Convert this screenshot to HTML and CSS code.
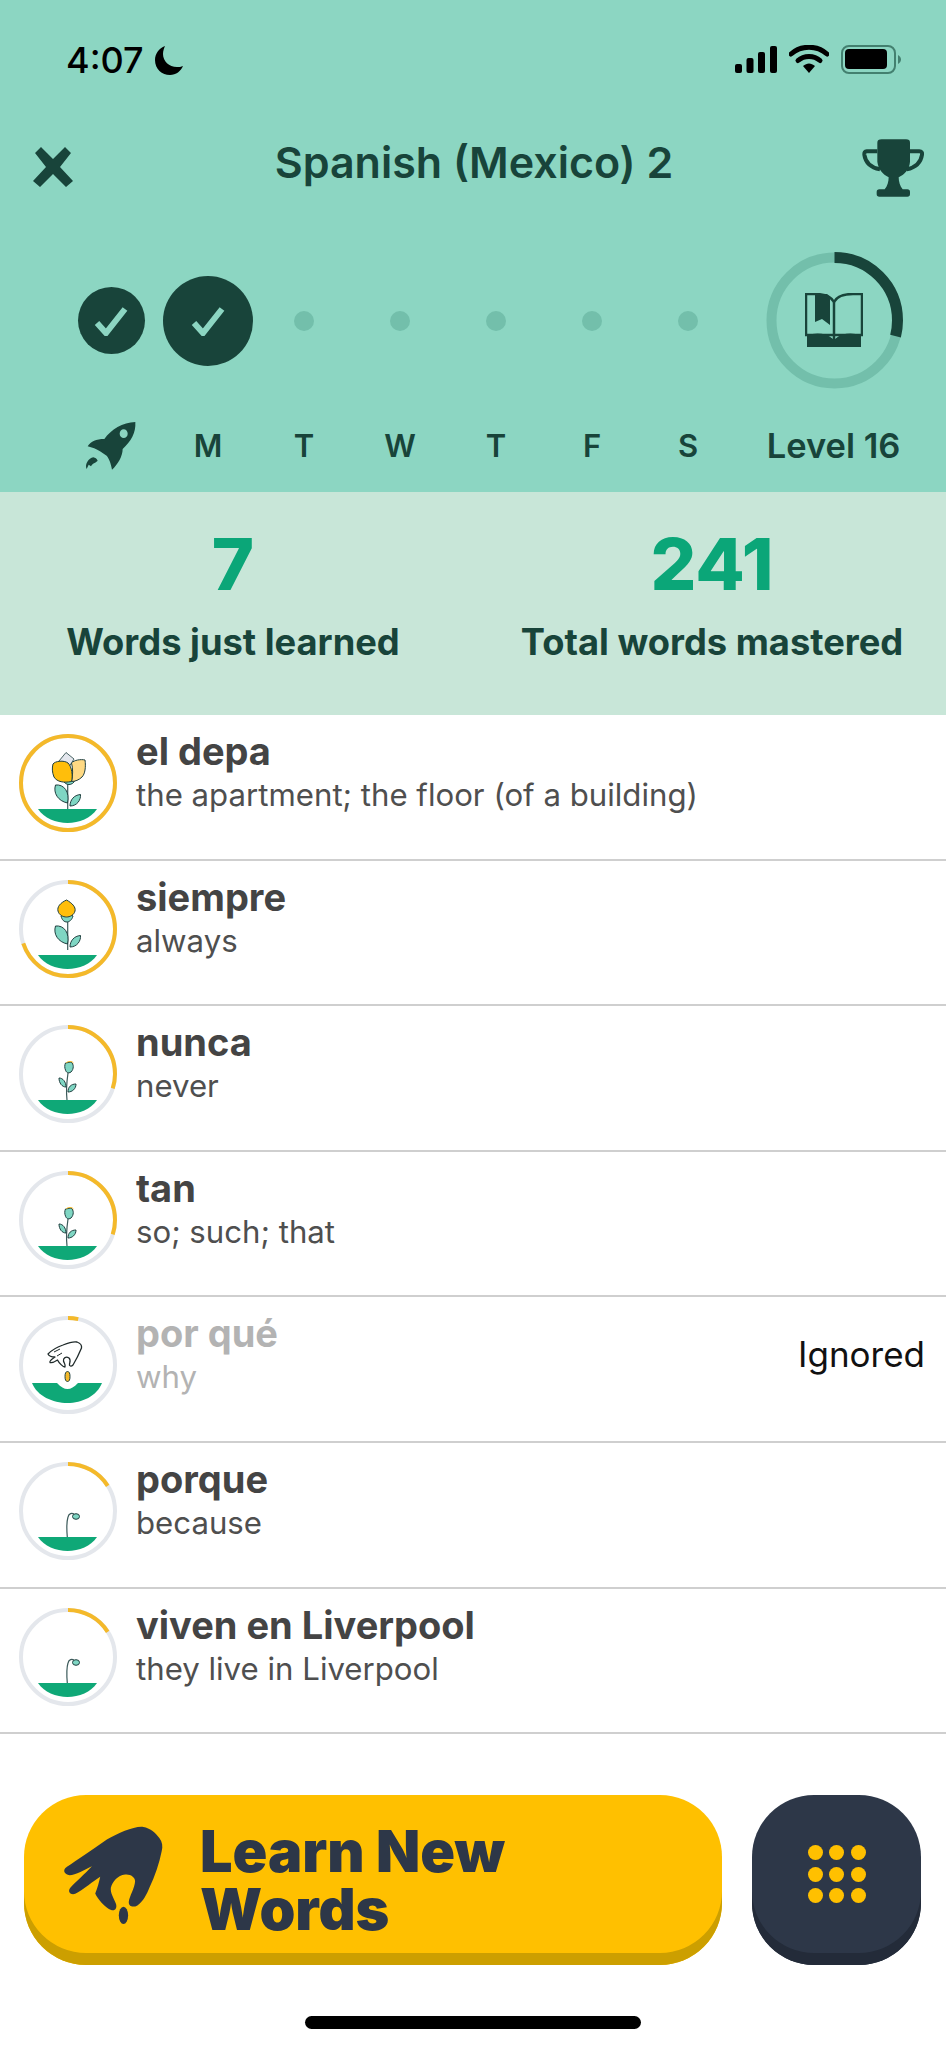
FILE: index.html
```html
<!DOCTYPE html>
<html lang="en">
<head>
  <meta charset="UTF-8" />
  <title>Spanish (Mexico) 2</title>
  <link rel="stylesheet" href="styles.css">
</head>
<body>
  <svg class="defs" width="0" height="0">
    <defs>
      <symbol id="ground" viewBox="0 0 98 98">
        <path d="M19 75H78C72 84 60 89 48.5 89S25 84 19 75Z" fill="#0fa877"/>
      </symbol>
      <symbol id="leaves-big" viewBox="0 0 98 98">
        <path d="M48.700 75V40" class="stem"/>
        <path d="M48.500 69C39 67 34 59 36.500 51C45 50 51 58 48.500 69Z" class="leaf"/>
        <path d="M51 72C51 66 55 61 61.500 60.500C62 66 58 72 51 72Z" class="leaf"/>
      </symbol>
      <symbol id="tulip" viewBox="0 0 98 98">
        <use href="#leaves-big"/>
        <path d="M44 46C46 52 54 52 56 46Z" class="leaf"/>
        <path d="M47 18.500L40 27L48 36L55 25Z" fill="#e4e7ee" stroke="#1f3f3f" stroke-width=".8"/>
        <path d="M52.500 29C55 26 62 25 66 26C67 33 66 40 63 43C60 46 56 47.500 52.500 47.500C54 42 54 34 52.500 29Z" fill="#ffd983" stroke="#1f3f3f" stroke-width="1"/>
        <path d="M34 30C36 27 45 26 49 29C53 33 54 42 52.500 47.500C45 49 38 48 35 43C33 38 33 34 34 30Z" fill="#ffbe0b" stroke="#1f3f3f" stroke-width="1"/>
      </symbol>
      <symbol id="bud" viewBox="0 0 98 98">
        <use href="#leaves-big" y="-5"/>
        <path d="M42 36C44 34 52 34 54 36C53 40 50 42 48 42C45 42 43 40 42 36Z" class="leaf"/>
        <path d="M47.500 20C41 23 38 27 39 31C40 35 44 37 47.500 37C51 37 55 35 56 31C57 27 53 23 47.500 20Z" fill="#ffbe0b" stroke="#1f3f3f" stroke-width="1"/>
      </symbol>
      <symbol id="seedling" viewBox="0 0 98 98">
        <path d="M48 75C47 66 48 55 49 48" class="stem"/>
        <path d="M47 62C43 62 40 58 40 53C44 53 47 57 47 62Z" class="leaf"/>
        <path d="M49 67C49 62 52 59 57 59C57 64 53 67 49 67Z" class="leaf"/>
        <path d="M46.500 38L52 37C55 39 55 44 52 47C49 49 47 47 46.500 45C45.500 43 45.500 40 46.500 38Z" class="leaf"/>
        <path d="M47 38C49 36 53 36 54.500 38" fill="none" stroke="#f4b92a" stroke-width="1"/>
      </symbol>
      <symbol id="hand-outline" viewBox="0 0 98 98">
        <path d="M58 26C61 27 63 29 62.500 32C60 38 57 44 54 49C52 51 50 50 50.500 48C51 46 52 44 50 42C47 40 44 42 44.500 45C45 47 47 49 46 51C44 51 40 47 38.500 44C37 45 33 47 31 46.500C30 45 33 43 36 41C33 41 30 40 29 38C32 35 38 31 44 29C49 27 54 25 58 26Z" fill="#fff" stroke="#1f2a2a" stroke-width="1.300" stroke-linejoin="round"/>
        <path d="M35 36L41 33M38 40L43 37" stroke="#1f2a2a" stroke-width="1" fill="none"/>
      </symbol>
      <symbol id="seed" viewBox="0 0 98 98">
        <path d="M13 67H38C42 71 45 73 48.500 73S55 71 59 67H83C78 80 63 87 48.500 87S18 80 13 67Z" fill="#0fa877"/>
        <ellipse cx="48.500" cy="60.500" rx="2.500" ry="5" fill="#f4b92a" stroke="#1f3f3f" stroke-width="1"/>
        <use href="#hand-outline"/>
      </symbol>
      <symbol id="sprout" viewBox="0 0 98 98">
        <path d="M48.300 75C47.500 66 47.500 60 49 55C50 51 53 51 55 52" class="stem"/>
        <ellipse cx="57" cy="54.500" rx="3.500" ry="2.800" class="leaf"/>
      </symbol>
    </defs>
  </svg>

  <header class="top">
    <div class="status">
      <div class="status-left">
        <span class="clock">4:07</span>
        <svg class="moon" viewBox="0 0 28 29"><path d="M10 0C4 2 0 8 0 14C0 23 7 29 15 29C21 29 26 25 28 20C26 21 24 21 22 21C14 21 8 15 8 8C8 5 9 2 10 0Z" fill="#000"/></svg>
      </div>
      <div class="status-right">
        <svg class="signal" viewBox="0 0 42 27">
          <rect x="0" y="18" width="7" height="9" rx="2"/>
          <rect x="11.500" y="12" width="7" height="15" rx="2"/>
          <rect x="23" y="6" width="7" height="21" rx="2"/>
          <rect x="35" y="0" width="7" height="27" rx="2"/>
        </svg>
        <svg class="wifi" viewBox="0 0 40 28">
          <path d="M2 9C12 0 28 0 38 9" fill="none" stroke="#000" stroke-width="5" stroke-linecap="round"/>
          <path d="M9 15.500C15 10 25 10 31 15.500" fill="none" stroke="#000" stroke-width="5" stroke-linecap="round"/>
          <path d="M14 21C18 17.500 22 17.500 26 21L20 28Z" fill="#000"/>
        </svg>
        <svg class="battery" viewBox="0 0 60 29">
          <rect x="1" y="1" width="53" height="27" rx="7" fill="none" stroke="#43806f" stroke-width="2"/>
          <rect x="4" y="4" width="42" height="20" rx="4" fill="#000"/>
          <path d="M57 10C59 11 60 13 60 14.500S59 18 57 19Z" fill="#43806f"/>
        </svg>
      </div>
    </div>

    <nav class="nav">
      <svg class="close" viewBox="0 0 42 40"><path d="M3 6L9 0L21 12L33 0L39 6L28 20L41 34L34 40L21 27L8 40L1 34L14 20Z" fill="#18443a"/></svg>
      <h1 class="title">Spanish (Mexico) 2</h1>
      <svg class="trophy" viewBox="0 0 252 228">
        <path d="M82 38Q82 28 95 28H168Q180 28 180 38V95C178 118 165 132 146 142C146 155 150 170 158 178H172Q180 178 180 186V192Q180 200 172 200H88Q80 200 80 192V186Q80 178 88 178H104C112 170 116 155 116 142C98 132 85 118 82 95Z" fill="#18443a"/>
        <path d="M82 64H50Q42 64 43 74C46 95 60 112 90 118M180 64H208Q218 64 216 74C213 95 198 112 170 118" fill="none" stroke="#18443a" stroke-width="12"/>
      </svg>
    </nav>

    <div class="week">
      <span class="done small"><svg viewBox="0 0 34 30"><path d="M3 17L12 27L31 3" class="tick"/></svg></span>
      <span class="done big"><svg viewBox="0 0 34 30"><path d="M3 17L12 27L31 3" class="tick"/></svg></span>
      <span class="dot"></span>
      <span class="dot"></span>
      <span class="dot"></span>
      <span class="dot"></span>
      <span class="dot"></span>
      <div class="level-ring">
        <svg class="ring-svg" viewBox="0 0 137 137">
          <circle cx="68.500" cy="68.500" r="63" fill="none" stroke="#73bfab" stroke-width="10"/>
          <circle cx="68.500" cy="68.500" r="63" fill="none" stroke="#18443a" stroke-width="11" pathLength="100" stroke-dasharray="29 71" transform="rotate(-90 68.500 68.500)"/>
        </svg>
        <svg class="book" viewBox="0 0 58 54">
          <path d="M1 1H10C18 1 26 3 29 9C32 3 40 1 48 1H57V42H1Z" fill="none" stroke="#18443a" stroke-width="2.500"/>
          <path d="M29 9V46" stroke="#18443a" stroke-width="2.500"/>
          <path d="M10 1H22C24 2 25 4 25 6V32L17 26L10 29Z" fill="#18443a"/>
          <path d="M2 43C10 39 21 40 28 46H30C37 40 48 39 56 43V54H2Z" fill="#18443a"/>
        </svg>
      </div>

      <svg class="rocket" viewBox="0 0 210 198">
        <path fill-rule="evenodd" d="M178 27C180 60 165 85 140 108C140 130 125 155 108 170C104 150 100 138 92 128L72 115C62 108 48 103 35 100C45 85 60 78 85 78C105 50 140 28 178 27ZM143 49A12 13 0 1 0 143.100 75A12 13 0 1 0 143 49Z" fill="#18443a"/>
        <path d="M52 133C38 135 25 155 32 168L38 155L45 160C50 150 62 148 65 143C62 137 58 134 52 133Z" fill="#18443a"/>
      </svg>
      <span class="day">M</span>
      <span class="day">T</span>
      <span class="day">W</span>
      <span class="day">T</span>
      <span class="day">F</span>
      <span class="day">S</span>
      <span class="day level">Level 16</span>
    </div>
  </header>

  <section class="stats">
    <div class="stat">
      <div class="stat-num">7</div>
      <div class="stat-label">Words just learned</div>
    </div>
    <div class="stat">
      <div class="stat-num">241</div>
      <div class="stat-label">Total words mastered</div>
    </div>
  </section>

  <ul class="words">
    <li class="word">
      <svg class="plant" viewBox="0 0 98 98">
        <circle cx="49" cy="49" r="47" class="track"/>
        <circle cx="49" cy="49" r="47" class="progress" pathLength="100" stroke-dasharray="100 0" transform="rotate(-90 49 49)"/>
        <use href="#tulip"/><use href="#ground"/>
      </svg>
      <div class="word-text"><div class="word-name">el depa</div><div class="word-sub">the apartment; the floor (of a building)</div></div>
    </li>
    <li class="word">
      <svg class="plant" viewBox="0 0 98 98">
        <circle cx="49" cy="49" r="47" class="track"/>
        <circle cx="49" cy="49" r="47" class="progress" pathLength="100" stroke-dasharray="70 30" transform="rotate(-90 49 49)"/>
        <use href="#bud"/><use href="#ground"/>
      </svg>
      <div class="word-text"><div class="word-name">siempre</div><div class="word-sub">always</div></div>
    </li>
    <li class="word">
      <svg class="plant" viewBox="0 0 98 98">
        <circle cx="49" cy="49" r="47" class="track"/>
        <circle cx="49" cy="49" r="47" class="progress" pathLength="100" stroke-dasharray="30 70" transform="rotate(-90 49 49)"/>
        <use href="#seedling"/><use href="#ground"/>
      </svg>
      <div class="word-text"><div class="word-name">nunca</div><div class="word-sub">never</div></div>
    </li>
    <li class="word">
      <svg class="plant" viewBox="0 0 98 98">
        <circle cx="49" cy="49" r="47" class="track"/>
        <circle cx="49" cy="49" r="47" class="progress" pathLength="100" stroke-dasharray="30 70" transform="rotate(-90 49 49)"/>
        <use href="#seedling"/><use href="#ground"/>
      </svg>
      <div class="word-text"><div class="word-name">tan</div><div class="word-sub">so; such; that</div></div>
    </li>
    <li class="word ignored">
      <svg class="plant" viewBox="0 0 98 98">
        <circle cx="49" cy="49" r="47" class="track"/>
        <circle cx="49" cy="49" r="47" class="progress" pathLength="100" stroke-dasharray="3.500 96.500" transform="rotate(-90 49 49)"/>
        <use href="#seed"/>
      </svg>
      <div class="word-text"><div class="word-name">por qué</div><div class="word-sub">why</div></div>
      <span class="ignored-tag">Ignored</span>
    </li>
    <li class="word">
      <svg class="plant" viewBox="0 0 98 98">
        <circle cx="49" cy="49" r="47" class="track"/>
        <circle cx="49" cy="49" r="47" class="progress" pathLength="100" stroke-dasharray="16 84" transform="rotate(-90 49 49)"/>
        <use href="#sprout"/><use href="#ground"/>
      </svg>
      <div class="word-text"><div class="word-name">porque</div><div class="word-sub">because</div></div>
    </li>
    <li class="word">
      <svg class="plant" viewBox="0 0 98 98">
        <circle cx="49" cy="49" r="47" class="track"/>
        <circle cx="49" cy="49" r="47" class="progress" pathLength="100" stroke-dasharray="16 84" transform="rotate(-90 49 49)"/>
        <use href="#sprout"/><use href="#ground"/>
      </svg>
      <div class="word-text"><div class="word-name">viven en Liverpool</div><div class="word-sub">they live in Liverpool</div></div>
    </li>
  </ul>

  <footer class="actions">
    <button class="learn">
      <svg class="hand" viewBox="60 130 320 310">
        <path d="M310 142C330 146 345 158 358 175C367 187 369 200 365 215C358 250 345 290 328 325C320 345 310 365 292 378C280 385 265 382 266 367C268 350 284 325 285 305C285 292 270 283 255 285C232 288 218 305 212 325C210 340 220 355 227 372C232 385 225 396 213 392C195 385 172 358 165 342C172 325 176 310 180 292C165 300 125 335 105 343C92 348 80 338 90 325C105 308 135 282 155 260C135 270 105 287 88 287C72 285 65 272 80 262C110 242 150 215 200 180C235 160 285 138 310 142Z" fill="#2d3748"/>
        <ellipse cx="250" cy="408" rx="14" ry="26" fill="#2d3748"/>
      </svg>
      <span class="learn-text">Learn New<br>Words</span>
    </button>
    <button class="grid-btn">
      <span class="pips">
        <i></i><i></i><i></i><i></i><i></i><i></i><i></i><i></i><i></i>
      </span>
    </button>
  </footer>
  <div class="home-bar"></div>
</body>
</html>
```

FILE: styles.css
```css
* { box-sizing: border-box; }
html, body { margin: 0; padding: 0; }
body { width: 946px; height: 2048px; overflow: hidden; background: #fff; font-family: Inter, "Liberation Sans", sans-serif; display: flex; flex-direction: column; }
.defs { position: absolute; }
.stem { fill: none; stroke: #3b5a5a; stroke-width: 1.200; }
.leaf { fill: #7fd6c3; stroke: #1f3f3f; stroke-width: 1; }
.tick { fill: none; stroke: #8cd6c2; stroke-width: 6; }

.top { height: 492px; background: #8cd6c2; color: #18443a; }
.status { display: flex; justify-content: space-between; padding: 44px 45px 0 66px; height: 130px; }
.status-left { display: flex; align-items: flex-start; gap: 11px; }
.clock { font-size: 36px; line-height: 32px; font-weight: 500; color: #000; }
.moon { width: 28px; height: 29px; margin-top: 2px; }
.status-right { display: flex; align-items: flex-start; gap: 12px; }
.signal { width: 42px; height: 27px; margin-top: 2px; }
.wifi { width: 40px; height: 28px; margin-top: 1px; }
.battery { width: 60px; height: 29px; margin-top: 1px; }

.nav { display: flex; align-items: center; justify-content: space-between; padding: 0 12px 0 32px; height: 76px; }
.close { width: 42px; height: 40px; margin-top: -2px; }
.title { margin: 0 0 12px; font-size: 43px; font-weight: 600; line-height: 48px; padding-left: 24px; }
.trophy { width: 84px; height: 76px; }

.week { display: grid; grid-template-columns: repeat(7, 96px) 198px; grid-template-rows: 137px 114px; justify-items: center; align-items: center; padding-left: 64px; margin-top: 46px; }
.done { display: flex; align-items: center; justify-content: center; border-radius: 50%; background: #18443a; }
.done.small { width: 67px; height: 67px; margin-right: 2px; }
.done.big { width: 90px; height: 90px; }
.done svg { width: 34px; height: 30px; }
.dot { width: 20px; height: 20px; border-radius: 50%; background: #73bfab; }
.level-ring { position: relative; width: 137px; height: 137px; margin-right: 2px; }
.ring-svg { width: 137px; height: 137px; display: block; }
.book { position: absolute; left: 39px; top: 41px; width: 58px; height: 54px; }
.rocket { width: 70px; height: 66px; margin-right: 2px; }
.day { font-size: 31px; font-weight: 600; line-height: 40px; }
.level { font-size: 34.500px; margin-right: 3px; }

.stats { height: 223px; background: #c8e6d8; display: grid; grid-template-columns: 400px 400px; column-gap: 79px; padding: 30px 0 0 33px; color: #18443a; }
.stat { text-align: center; }
.stat-num { font-size: 72px; font-weight: 800; line-height: 84px; color: #0ba678; }
.stat-label { font-size: 36.300px; font-weight: 700; line-height: 42px; margin-top: 15px; }

.words { list-style: none; margin: 0; padding: 0; }
.word { height: 145.6px; border-bottom: 2px solid #cfcfcf; display: flex; align-items: flex-start; padding: 19px 21px 0 19px; }
.plant { width: 98px; height: 98px; flex: none; }
.track { fill: none; stroke: #e4e7ec; stroke-width: 4; }
.progress { fill: none; stroke: #f4b92a; stroke-width: 4; }
.word-text { margin-left: 19px; margin-top: -7px; flex: 1; }
.word-name { font-size: 38px; font-weight: 700; line-height: 48px; color: #444; }
.word-sub { font-size: 31.200px; font-weight: 400; line-height: 41px; color: #4f4f4f; }
.ignored .word-name, .ignored .word-sub { color: #b3b3b3; }
.ignored-tag { font-size: 35px; line-height: 40px; color: #111; margin-top: 18px; }

.actions { display: flex; justify-content: space-between; padding: 61px 25px 0 24px; }
.learn { width: 698px; height: 170px; border: none; border-radius: 62px; background: #ffc000; box-shadow: inset 0 -12px 0 #cc9f00; display: flex; align-items: center; padding: 0 0 12px 36px; color: #2d3748; font-family: inherit; text-align: left; }
.hand { width: 107px; height: 103px; margin-right: 33px; flex: none; }
.learn-text { font-size: 57.500px; line-height: 58px; font-weight: 900; margin-top: 12px; }
.grid-btn { width: 169px; height: 170px; border: none; border-radius: 62px; background: #2d3748; box-shadow: inset 0 -12px 0 #232b39; display: flex; align-items: center; justify-content: center; padding: 0 0 12px; }
.pips { display: grid; grid-template-columns: repeat(3, 15px); grid-auto-rows: 15px; gap: 6.500px; }
.pips i { background: #ffc000; border-radius: 50%; }
.home-bar { width: 336px; height: 13px; border-radius: 7px; background: #000; margin: 51px 0 0 305px; }
```
